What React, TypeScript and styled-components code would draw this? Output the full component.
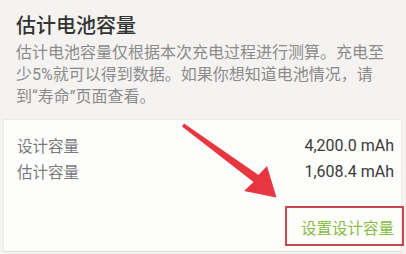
import React from 'react';
import styled, { createGlobalStyle } from 'styled-components';

const GlobalStyle = createGlobalStyle`
  html, body {
    margin: 0;
    padding: 0;
    background: #f4f3f1;
  }
  body {
    font-family: Roboto, "Noto Sans CJK SC", sans-serif;
  }
`;

interface Row {
  label: string;
  value: string;
}

const rows: Row[] = [
  { label: '设计容量', value: '4,200.0 mAh' },
  { label: '估计容量', value: '1,608.4 mAh' },
];

const App = () => {
  return (
    <Page>
      <GlobalStyle />
      <Intro>
        <Title>估计电池容量</Title>
        <Desc>
          估计电池容量仅根据本次充电过程进行测算。充电至少5%就可以得到数据。如果你想知道电池情况，请到“寿命”页面查看。
        </Desc>
      </Intro>
      <Card>
        {rows.map(row => (
          <InfoRow key={row.label}>
            <Label>{row.label}</Label>
            <Value>{row.value}</Value>
          </InfoRow>
        ))}
        <Actions>
          <ActionButton>设置设计容量</ActionButton>
        </Actions>
      </Card>
      <Arrow viewBox="0 0 406 254" width="406" height="254">
        <polygon
          points="184,123.6 258.5,175 267,166 276.5,197.5 244,191 253.5,182 182,126.4"
          fill="#e7363f"
        />
      </Arrow>
    </Page>
  );
};

export default App;

const Page = styled.div`
  position: relative;
  width: 406px;
  height: 254px;
  overflow: hidden;
  background: #f4f3f1;
`;

const Intro = styled.div`
  display: flex;
  flex-direction: column;
  gap: 3px;
  padding: 11px 20px 11px 16px;
`;

const Title = styled.div`
  font-size: 20px;
  line-height: 28px;
  font-weight: 500;
  color: #333333;
  font-family: "Noto Sans CJK SC", sans-serif;
`;

const Desc = styled.div`
  font-size: 16px;
  line-height: 22px;
  color: #8b8b8b;
  font-family: Roboto, "Noto Sans CJK SC", sans-serif;
`;

const Card = styled.div`
  margin: 0 4px 0 3px;
  height: 133px;
  box-sizing: border-box;
  padding: 12px 7px 0 13px;
  background: #fdfdfc;
  border: 1px solid #ebeae8;
  border-bottom-color: #dddcda;
`;

const InfoRow = styled.div`
  display: flex;
  justify-content: space-between;
  align-items: center;
  height: 26px;
`;

const Label = styled.span`
  font-size: 15.5px;
  color: #7a7a7a;
  font-family: "Noto Sans CJK SC", sans-serif;
`;

const Value = styled.span`
  font-size: 16px;
  color: #3a3a3a;
  font-family: Roboto, sans-serif;
`;

const Actions = styled.div`
  display: flex;
  justify-content: flex-end;
  margin-top: 22px;
  margin-right: -10px;
`;

const ActionButton = styled.div`
  box-sizing: border-box;
  width: 119px;
  height: 40px;
  padding: 2px 8px 0 0;
  display: flex;
  align-items: center;
  justify-content: flex-end;
  white-space: nowrap;
  font-size: 15.5px;
  color: #86bb45;
  font-family: "Noto Sans CJK SC", sans-serif;
  border: 2px solid #c9464f;
`;

const Arrow = styled.svg`
  position: absolute;
  left: 0;
  top: 0;
  pointer-events: none;
`;
